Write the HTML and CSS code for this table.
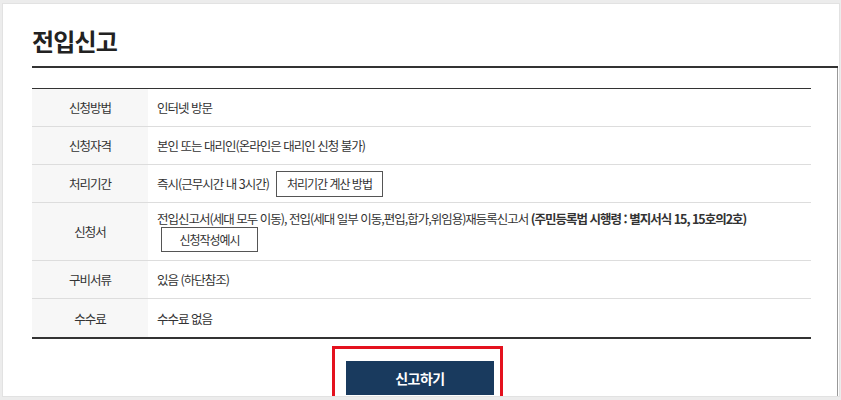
FILE: index.html
```html
<!DOCTYPE html>
<html lang="ko">
<head>
    <meta charset="UTF-8">
    <meta name="viewport" content="width=device-width, initial-scale=1.0">
    <title>전입신고</title>
    <link rel="stylesheet" href="styles.css">
</head>
<body>
    <div class="page">
        <h2 class="title">전입신고</h2>
        <div class="content">
            <div class="info">
                <div class="row">
                    <div class="label">신청방법</div>
                    <div class="value">인터넷 방문</div>
                </div>
                <div class="row">
                    <div class="label">신청자격</div>
                    <div class="value">본인 또는 대리인(온라인은 대리인 신청 불가)</div>
                </div>
                <div class="row">
                    <div class="label">처리기간</div>
                    <div class="value">즉시(근무시간 내 3시간) <button class="small-btn">처리기간 계산 방법</button></div>
                </div>
                <div class="row tall">
                    <div class="label">신청서</div>
                    <div class="value stack">
                        <p>전입신고서(세대 모두 이동), 전입(세대 일부 이동,편입,합가,위임용)재등록신고서 <b>(주민등록법 시행령 : 별지서식 15, 15호의2호)</b></p>
                        <button class="small-btn sample">신청작성예시</button>
                    </div>
                </div>
                <div class="row">
                    <div class="label">구비서류</div>
                    <div class="value">있음 (하단참조)</div>
                </div>
                <div class="row">
                    <div class="label">수수료</div>
                    <div class="value">수수료 없음</div>
                </div>
            </div>
            <div class="btn-area">
                <div class="mark">
                    <button class="submit">신고하기</button>
                </div>
            </div>
        </div>
    </div>
</body>
</html>
```

FILE: styles.css
```css
* {
    box-sizing: border-box;
}
body {
    margin: 0;
    background: #ececec;
    font-family: "Noto Sans CJK KR", "Noto Sans", sans-serif;
    color: #333;
}
.page {
    margin: 3px 0 0 2px;
    width: 838px;
    height: 394px;
    border: 1px solid #e2e2e2;
    background: #fff;
    padding-left: 29px;
    overflow: hidden;
}
.title {
    margin: 0 1px 0 0;
    padding: 21px 0 9px;
    font-size: 24px;
    line-height: 32px;
    font-weight: 700;
    letter-spacing: -0.8px;
    color: #222;
    border-bottom: 2px solid #333;
}
.content {
    margin-right: 1px;
    padding: 20px 26px 0 0;
    height: 330px;
    border-right: 1px solid #999;
}
.info {
    border-top: 1px solid #333;
    border-bottom: 2px solid #333;
}
.row {
    display: flex;
    height: 38px;
    border-bottom: 1px solid #ddd;
    font-size: 12.5px;
    letter-spacing: -1px;
}
.row:last-child {
    border-bottom: none;
}
.row.tall {
    height: 58px;
}
.label {
    width: 116px;
    flex-shrink: 0;
    background: #f7f7f7;
    display: flex;
    align-items: center;
    justify-content: center;
}
.value {
    display: flex;
    align-items: center;
    padding-left: 9px;
    gap: 7px;
}
.value.stack {
    flex-direction: column;
    align-items: flex-start;
    justify-content: flex-start;
    gap: 0;
    padding-top: 8px;
}
.value p {
    margin: 0;
    line-height: 16px;
}
.small-btn {
    font-family: inherit;
    font-size: 12px;
    letter-spacing: -1px;
    color: #333;
    background: #fff;
    border: 1px solid #555;
    height: 26px;
    padding: 0 10px;
}
.small-btn.sample {
    margin-left: 4px;
    height: 25px;
    width: 97px;
    padding: 0;
}
.btn-area {
    display: flex;
    justify-content: center;
    padding: 7px 8px 0 0;
}
.mark {
    border: 3px solid #e4111e;
    padding: 12px 6px 0 11px;
    height: 60px;
}
.submit {
    width: 148px;
    height: 34px;
    border: none;
    background: #193a5e;
    color: #fff;
    font-family: inherit;
    font-size: 14px;
    font-weight: 700;
    letter-spacing: -0.5px;
}
```
